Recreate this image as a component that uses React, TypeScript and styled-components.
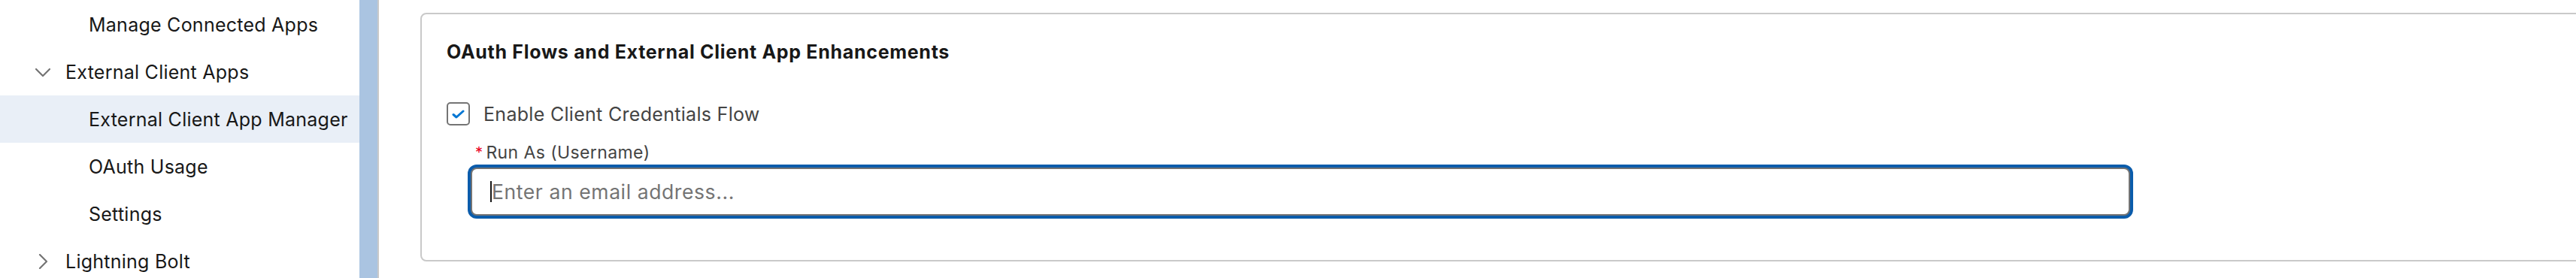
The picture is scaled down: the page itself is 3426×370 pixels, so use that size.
import React from 'react'
import styled, { createGlobalStyle } from 'styled-components'

const GlobalStyle = createGlobalStyle`
  html, body {
    margin: 0;
    padding: 0;
    background: #ffffff;
    font-family: Inter, "Noto Sans", "Liberation Sans", sans-serif;
    -webkit-font-smoothing: antialiased;
  }
`

const Page = styled.div`
  display: flex;
  flex-direction: row;
  height: 370px;
  overflow: hidden;
`

const Sidebar = styled.nav`
  width: 478px;
  flex-shrink: 0;
  padding-top: 1px;
  display: flex;
  flex-direction: column;
`

const TreeRow = styled.div<{ $level: number; $selected?: boolean }>`
  height: 63px;
  flex-shrink: 0;
  display: flex;
  align-items: center;
  gap: 20px;
  padding-left: ${(p) => (p.$level === 0 ? 47 : 118)}px;
  background: ${(p) => (p.$selected ? '#e9eff7' : 'transparent')};
  color: #181818;
  font-size: 25px;
  letter-spacing: 0.25px;
  line-height: 30px;
  white-space: nowrap;
`

const Chevron = styled.svg<{ $open?: boolean }>`
  width: 20px;
  height: 20px;
  flex-shrink: 0;
  transform: ${(p) => (p.$open ? 'none' : 'rotate(-90deg)')};
`

const Splitter = styled.div`
  width: 24px;
  flex-shrink: 0;
  background: #aac4e1;
  border-right: 2px solid #c9c9c9;
`

const Main = styled.main`
  flex: 1;
  min-width: 0;
  padding: 17px 0 0 55px;
  overflow: hidden;
`

const Card = styled.section`
  width: 3200px;
  height: 331px;
  box-sizing: border-box;
  border: 2px solid #c9c9c9;
  border-radius: 8px;
  padding: 35px 0 0 33px;
`

const Heading = styled.h2`
  margin: 0;
  font-size: 25px;
  letter-spacing: 0.7px;
  line-height: 30px;
  font-weight: 700;
  color: #181818;
`

const CheckRow = styled.label`
  display: flex;
  align-items: center;
  gap: 18px;
  margin-top: 52px;
  height: 31px;
  font-size: 25px;
  letter-spacing: 0.3px;
  line-height: 30px;
  color: #444444;
`

const CheckBox = styled.span`
  width: 31px;
  height: 31px;
  box-sizing: border-box;
  border: 2px solid #747474;
  border-radius: 5px;
  display: flex;
  align-items: center;
  justify-content: center;
  flex-shrink: 0;
`

const Field = styled.div`
  margin: 23px 0 0 32px;
  width: 2207px;
`

const FieldLabel = styled.div`
  font-size: 23px;
  letter-spacing: 0.4px;
  line-height: 26px;
  color: #444444;
  padding-left: 6px;
  display: flex;
  gap: 4px;
`

const Required = styled.abbr`
  color: #ea001e;
  text-decoration: none;
  font-size: 20px;
`

const InputWrap = styled.div`
  position: relative;
  margin-top: 7px;
`

const TextInput = styled.input`
  display: block;
  width: 100%;
  height: 64px;
  box-sizing: border-box;
  border: 2px solid #747474;
  border-radius: 8px;
  box-shadow: 0 0 0 4px #0b5cab;
  padding: 0 0 0 26px;
  font-family: inherit;
  font-size: 26.5px;
  letter-spacing: 0.6px;
  color: #181818;
  outline: none;
  &::placeholder {
    color: #747474;
  }
`

const Caret = styled.span`
  position: absolute;
  left: 26px;
  top: 18px;
  width: 2px;
  height: 28px;
  background: #181818;
`

const tree = [
  { label: 'Manage Connected Apps', level: 1 },
  { label: 'External Client Apps', level: 0, open: true },
  { label: 'External Client App Manager', level: 1, selected: true },
  { label: 'OAuth Usage', level: 1 },
  { label: 'Settings', level: 1 },
  { label: 'Lightning Bolt', level: 0, open: false },
]

const App = () => {
  return (
    <>
      <GlobalStyle />
      <Page>
        <Sidebar>
          {tree.map((item) => (
            <TreeRow key={item.label} $level={item.level} $selected={item.selected}>
              {item.level === 0 && (
                <Chevron $open={item.open} viewBox="0 0 20 20">
                  <polyline points="1,6 10,15 19,6" fill="none" stroke="#747474" strokeWidth="2.2" strokeLinecap="round" strokeLinejoin="round" />
                </Chevron>
              )}
              {item.label}
            </TreeRow>
          ))}
        </Sidebar>
        <Splitter />
        <Main>
          <Card>
            <Heading>OAuth Flows and External Client App Enhancements</Heading>
            <CheckRow>
              <CheckBox>
                <svg width="17" height="12" viewBox="0 0 17 12">
                  <polyline points="2,6.5 6,10 15,2" fill="none" stroke="#0176d3" strokeWidth="3" strokeLinecap="round" strokeLinejoin="round" />
                </svg>
              </CheckBox>
              Enable Client Credentials Flow
            </CheckRow>
            <Field>
              <FieldLabel>
                <Required title="required">*</Required>
                Run As (Username)
              </FieldLabel>
              <InputWrap>
                <TextInput type="email" placeholder="Enter an email address..." />
                <Caret />
              </InputWrap>
            </Field>
          </Card>
        </Main>
      </Page>
    </>
  )
}

export default App
